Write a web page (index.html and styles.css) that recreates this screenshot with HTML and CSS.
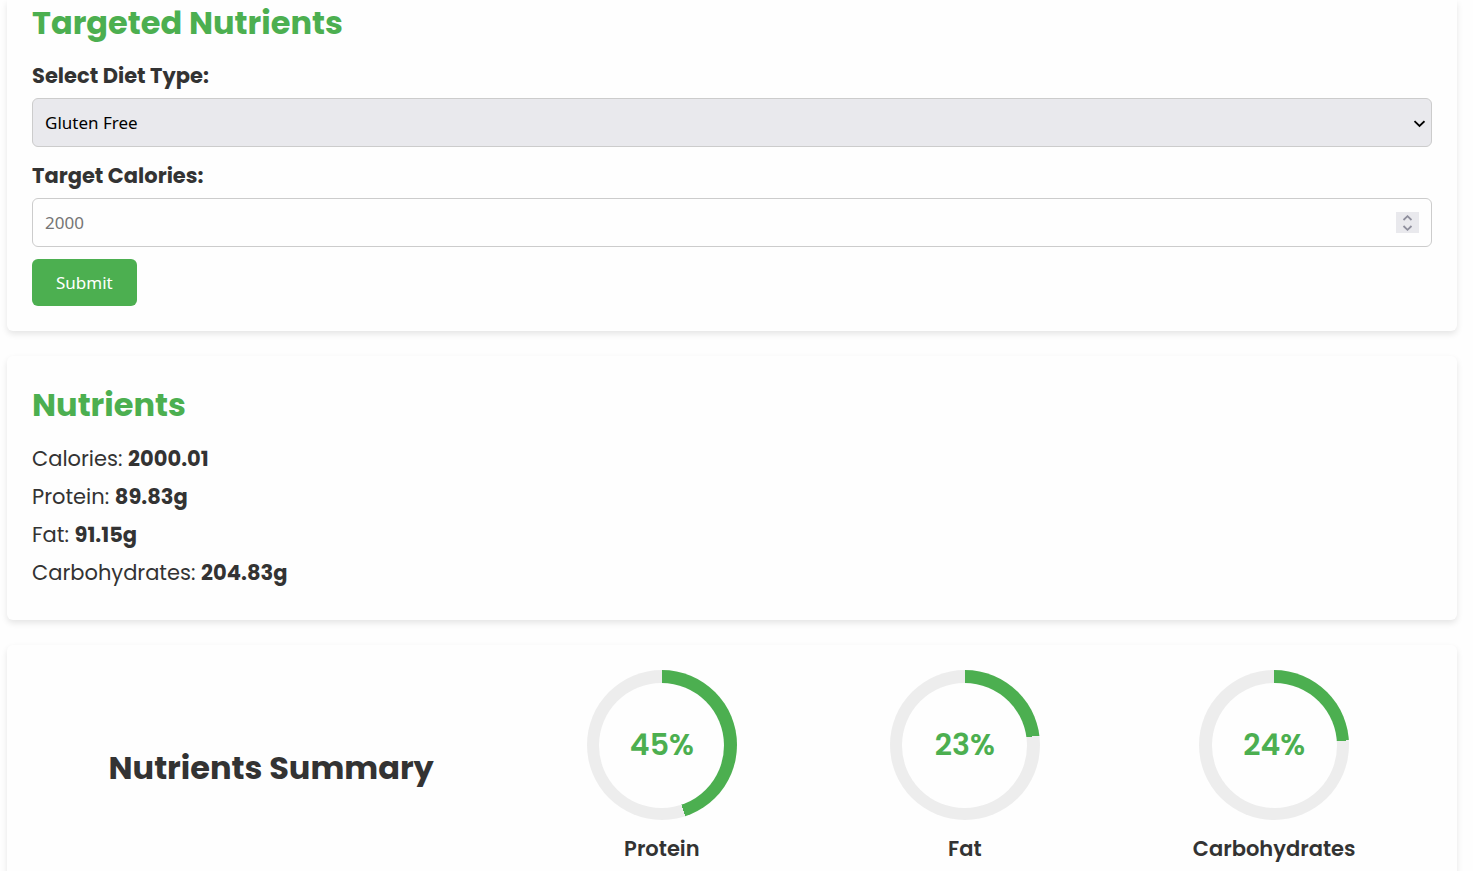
FILE: index.html
```html
<!DOCTYPE html>
<html lang="en">
<head>
<meta charset="utf-8">
<title>Targeted Nutrients</title>
<link rel="stylesheet" href="styles.css">
</head>
<body>
<main class="page">
  <section class="card card-form">
    <h2 class="title">Targeted Nutrients</h2>
    <form class="form">
      <label class="label" for="diet">Select Diet Type:</label>
      <div class="field">
        <select class="control select" id="diet"><option>Gluten Free</option></select>
        <svg class="chevron" width="12" height="8" viewBox="0 0 12 8" fill="none" stroke="#000" stroke-width="1.8"><path d="M1.5 1.2 6.5 6 11.5 1.2"/></svg>
      </div>
      <label class="label" for="calories">Target Calories:</label>
      <div class="field">
        <input class="control" id="calories" type="number" placeholder="2000">
        <span class="spinner" aria-hidden="true">
          <svg width="11" height="16" viewBox="0 0 11 16" fill="none" stroke="#8f8f9d" stroke-width="1.8"><path d="M1.5 5 5.5 1.2 9.5 5M1.5 11 5.5 14.8 9.5 11"/></svg>
        </span>
      </div>
      <button class="submit" type="button">Submit</button>
    </form>
  </section>

  <section class="card card-list">
    <h2 class="title">Nutrients</h2>
    <div class="rows">
      <p>Calories: <strong>2000.01</strong></p>
      <p>Protein: <strong>89.83g</strong></p>
      <p>Fat: <strong>91.15g</strong></p>
      <p>Carbohydrates: <strong>204.83g</strong></p>
    </div>
  </section>

  <section class="card summary">
    <h2 class="title title-dark">Nutrients Summary</h2>
    <div class="stat">
      <div class="ring" style="--value: 45%"><span class="ring-inner">45%</span></div>
      <p class="stat-name">Protein</p>
    </div>
    <div class="stat">
      <div class="ring" style="--value: 23%"><span class="ring-inner">23%</span></div>
      <p class="stat-name">Fat</p>
    </div>
    <div class="stat">
      <div class="ring" style="--value: 24%"><span class="ring-inner">24%</span></div>
      <p class="stat-name">Carbohydrates</p>
    </div>
  </section>
</main>
</body>
</html>
```

FILE: styles.css
```css
* { box-sizing: border-box; }
body {
  margin: 0;
  background: #fefefe;
  color: #333;
  font-family: Poppins, Inter, sans-serif;
  font-size: 21px;
  line-height: 32px;
}
h2, p { margin: 0; }
.page {
  display: flex;
  flex-direction: column;
  gap: 25px;
  padding: 0 16px 0 7px;
}
.card {
  padding: 25px;
  background: #fefefe;
  border-radius: 6px;
  box-shadow: 0 3px 6px rgba(0, 0, 0, 0.1);
}
.card-form { padding-top: 0; border-radius: 0 0 6px 6px; }
.title {
  color: #4caf50;
  font-size: 32px;
  font-weight: 700;
  line-height: 46px;
}
.title-dark { color: #333; }
.form {
  display: flex;
  flex-direction: column;
  align-items: stretch;
  padding-top: 14px;
}
.label { font-weight: 700; }
.field {
  position: relative;
  margin: 6px 0 12px;
}
.field + .label { margin-top: 1px; }
.control {
  display: block;
  width: 100%;
  height: 49px;
  margin: 0;
  padding: 0 12px;
  border: 1px solid #ccc;
  border-radius: 6px;
  background: #fefefe;
  color: #000;
  font: 17px "Noto Sans", "Open Sans", sans-serif;
  appearance: none;
}
input.control { appearance: textfield; }
.control::placeholder { color: #757575; }
.select { background: #e9e9ed; }
.chevron {
  position: absolute;
  right: 7px;
  top: 22px;
  pointer-events: none;
}
.spinner {
  position: absolute;
  right: 13px;
  top: 14px;
  display: grid;
  place-items: center;
  width: 23px;
  height: 21px;
  background: #e9e9ed;
}
.submit {
  align-self: flex-start;
  padding: 12px 24px;
  border: 0;
  border-radius: 6px;
  background: #4caf50;
  color: #fff;
  font: 17px/23px "Noto Sans", "Open Sans", sans-serif;
}
.card-list { padding: 26px 25px 31px; }
.rows {
  display: grid;
  gap: 6px;
  padding-top: 15px;
}
.summary {
  display: flex;
  justify-content: space-around;
  align-items: center;
}
.stat {
  display: flex;
  flex-direction: column;
  align-items: center;
  gap: 13px;
}
.ring {
  display: grid;
  place-items: center;
  width: 150px;
  height: 150px;
  border-radius: 50%;
  background: conic-gradient(#4caf50 var(--value), #ededed 0);
}
.ring-inner {
  display: grid;
  place-items: center;
  width: 125px;
  height: 125px;
  border-radius: 50%;
  background: #fefefe;
  color: #4caf50;
  font-size: 30px;
  font-weight: 600;
}
.stat-name { font-weight: 600; }
```
